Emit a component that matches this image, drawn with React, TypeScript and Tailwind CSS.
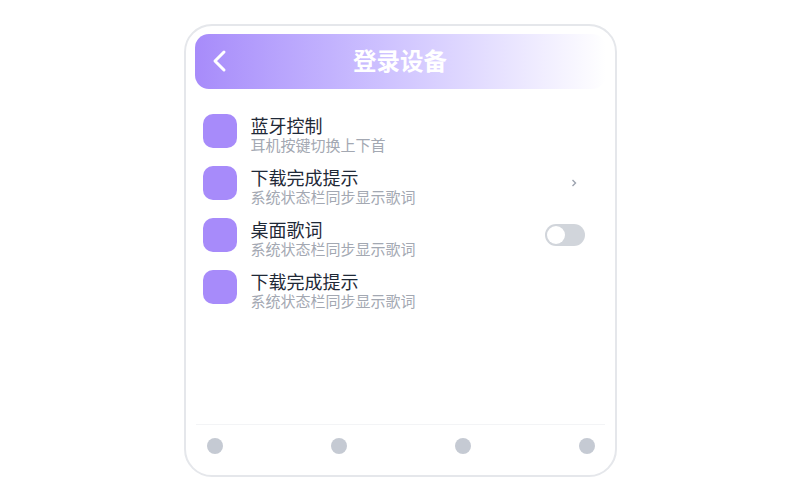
const font = { fontFamily: '"Noto Sans CJK SC", sans-serif' };

const rows = [
  { title: "蓝牙控制", sub: "耳机按键切换上下首", right: null },
  { title: "下载完成提示", sub: "系统状态栏同步显示歌词", right: "chevron" },
  { title: "桌面歌词", sub: "系统状态栏同步显示歌词", right: "toggle" },
  { title: "下载完成提示", sub: "系统状态栏同步显示歌词", right: null },
];

function Row({ title, sub, right }: { title: string; sub: string; right: string | null }) {
  return (
    <div className="flex items-start h-[34px] mb-[18px]">
      <div className="w-[34px] h-[34px] rounded-[10px] bg-[#a78bfa] shrink-0" />
      <div className="ml-[14px] flex-1 mt-[1px]">
        <div className="text-[18px] leading-[20px] text-[#1f2937]">{title}</div>
        <div className="text-[15px] leading-[20px] text-[#a3a8b2]">{sub}</div>
      </div>
      {right === "chevron" && (
        <svg className="mr-[21px] mt-[13px]" width="6" height="8" viewBox="0 0 6 8" fill="none">
          <path d="M1.5 1 L4.5 4 L1.5 7" stroke="#9ca3af" strokeWidth="1.4" />
        </svg>
      )}
      {right === "toggle" && (
        <div className="mr-[13px] mt-[6px] w-[40px] h-[22px] rounded-full bg-[#d1d5db] p-[2px]">
          <div className="w-[18px] h-[18px] rounded-full bg-white" />
        </div>
      )}
    </div>
  );
}

export default function App() {
  return (
    <div className="w-[800px] h-[500px] bg-white flex justify-center pt-[24px]" style={font}>
      <div className="w-[433px] h-[453px] border-2 border-[#e5e7eb] rounded-[28px] bg-white px-[9px] pt-[8px] flex flex-col">
        <div className="h-[55px] shrink-0 rounded-[14px] bg-gradient-to-r from-[#a78bfa] to-white flex items-center justify-center relative">
          <svg className="absolute left-[17px] top-[15px]" width="16" height="24" viewBox="0 0 16 24" fill="none">
            <path d="M12 3 L3 12 L12 21" stroke="white" strokeWidth="3" strokeLinecap="round" strokeLinejoin="round" />
          </svg>
          <span className="text-[23.5px] leading-[32px] font-bold text-white -mt-[4px]">登录设备</span>
        </div>
        <div className="flex-1 pt-[25px] px-[8px]">
          {rows.map((row, i) => (
            <Row key={i} title={row.title} sub={row.sub} right={row.right} />
          ))}
        </div>
        <div className="h-[51px] shrink-0 mx-[1px] border-t border-[#f3f4f6] flex justify-between items-start pt-[13px] pl-[11px] pr-[10px]">
          <div className="w-[16px] h-[16px] rounded-full bg-[#c5cad3]" />
          <div className="w-[16px] h-[16px] rounded-full bg-[#c5cad3]" />
          <div className="w-[16px] h-[16px] rounded-full bg-[#c5cad3]" />
          <div className="w-[16px] h-[16px] rounded-full bg-[#c5cad3]" />
        </div>
      </div>
    </div>
  );
}
